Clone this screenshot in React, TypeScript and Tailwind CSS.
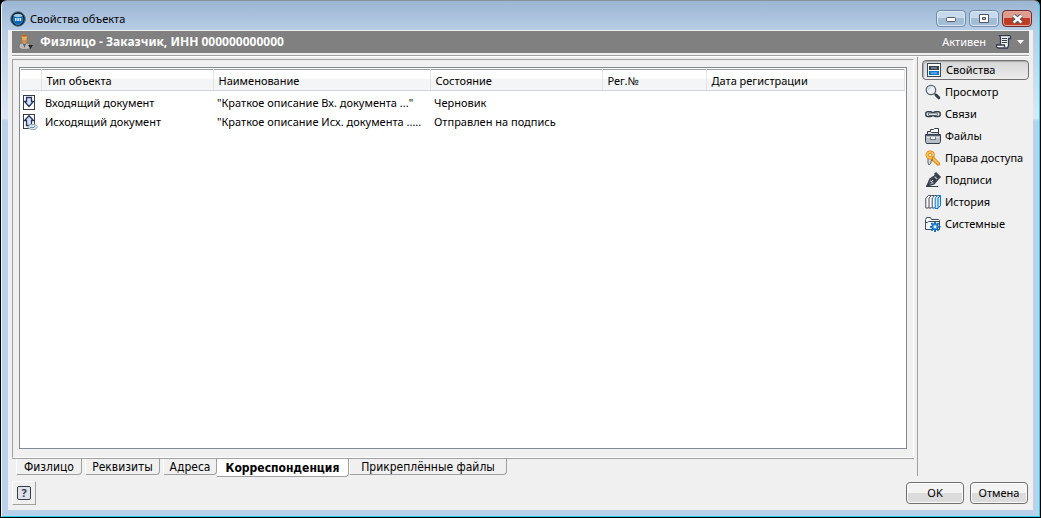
import { useState } from "react";
import type { ReactNode } from "react";

function Icon({ children }: { children: ReactNode }) {
  return (
    <svg width="16" height="16" viewBox="0 0 16 16" fill="none" className="shrink-0" aria-hidden="true">
      {children}
    </svg>
  );
}

const sections = [
  {
    name: "Свойства",
    icon: (
      <Icon>
        <rect x="1.5" y="1.5" width="13" height="13" fill="#fff" stroke="#3f4653" />
        <rect x="3" y="4" width="10" height="4" fill="#353d4a" />
        <path d="M5 6h6" stroke="#aeb8c6" />
        <rect x="3" y="9" width="10" height="4" fill="#0878d0" />
        <path d="M5 11h6" stroke="#9fc8ea" />
      </Icon>
    ),
  },
  {
    name: "Просмотр",
    icon: (
      <Icon>
        <circle cx="6" cy="6" r="4.7" fill="#edf1f5" stroke="#59616d" strokeWidth="1.3" />
        <path d="M3.5 6a2.5 2.5 0 0 1 2.500-2.500" stroke="#a9c4dc" />
        <path d="M9.3 9.3l1.700 1.700" stroke="#59616d" strokeWidth="1.500" />
        <path d="M11 11l2.800 2.800" stroke="#353d4a" strokeWidth="3" strokeLinecap="round" />
      </Icon>
    ),
  },
  {
    name: "Связи",
    icon: (
      <Icon>
        <rect x="0.8" y="5.8" width="6.7" height="4.700" rx="2" stroke="#353d4a" strokeWidth="1.500" />
        <rect x="8.5" y="5.8" width="6.700" height="4.700" rx="2" stroke="#353d4a" strokeWidth="1.500" />
        <rect x="3.500" y="7" width="9" height="2.400" rx="1" fill="#f0f2f4" stroke="#353d4a" strokeWidth="0.900" />
      </Icon>
    ),
  },
  {
    name: "Файлы",
    icon: (
      <Icon>
        <path d="M5.5 5V1.500h3l1-1h4V6" fill="#fff" stroke="#353d4a" />
        <path d="M2.500 7V3.500h3l1 1h7V7" fill="#dce0e5" stroke="#353d4a" />
        <path d="M.500 6.500h15v7l-1 2h-13l-1-2z" fill="#b7bdc5" stroke="#353d4a" />
        <path d="M1 7.500h14" stroke="#555d69" />
        <path d="M2 9.500h12" stroke="#e0e3e7" />
        <path d="M5.500 9v2.500h5V9" fill="#f6f7f8" stroke="#69717d" />
      </Icon>
    ),
  },
  {
    name: "Права доступа",
    icon: (
      <Icon>
        <path d="M3 7v6l1 2 2-2v-2l1-1-1-3" fill="#d8dbe0" stroke="#59616d" />
        <circle cx="5.200" cy="5" r="2.900" stroke="#d87912" strokeWidth="3.400" />
        <circle cx="5.200" cy="5" r="2.900" stroke="#ffc44c" strokeWidth="1.900" />
        <path d="M8 6.500l6.500 6.500v2H12l-1-2H9.500l-.500-2H7.500V8z" fill="#ffc44c" stroke="#d87912" />
      </Icon>
    ),
  },
  {
    name: "Подписи",
    icon: (
      <Icon>
        <path d="M2 14l3-7 5.500-3.500 3 3L9 12z" fill="#aeb5be" stroke="#353d4a" strokeWidth="1.400" />
        <path d="M9.500 2l4.500 4.500 1.500-1.500L11 .500z" fill="#353d4a" stroke="#353d4a" />
        <path d="M2 14l5.500-5.500" stroke="#353d4a" strokeWidth="1.500" />
        <path d="M5 8l4-3 3 3-3 3" fill="#353d4a" />
        <path d="M6 10l2-2" stroke="#fff" />
        <path d="M1 14.500h12" stroke="#353d4a" />
      </Icon>
    ),
  },
  {
    name: "История",
    icon: (
      <Icon>
        <path d="M.800 4l2.700-2.500H6v10L3.500 14H.800z" fill="#fff" stroke="#454c58" />
        <path d="M4 4l2.700-2.500H9v10L6.500 14H4z" fill="#fff" stroke="#454c58" />
        <path d="M7.200 4l2.700-2.500H12v10L9.500 14H7.200z" fill="#fff" stroke="#454c58" />
        <path d="M10.200 4l2.600-2.500h2.700v10L13 14.500h-2.800z" fill="#cfe5f8" stroke="#0878d0" />
        <path d="M13 14V4l2.500-2.500" stroke="#0878d0" />
      </Icon>
    ),
  },
  {
    name: "Системные",
    icon: (
      <Icon>
        <path d="M.500 13.500v-10l1-2h4l1 2h7l1 1v9z" fill="#f4f5f7" stroke="#454c58" />
        <path d="M.500 6.500h2l1-1h11" stroke="#454c58" />
        <path d="M10 5.500v10.500M5 10.800h10.500M6.300 7.100l7.400 7.400M13.700 7.100l-7.400 7.400" stroke="#0866b4" strokeWidth="1.800" />
        <circle cx="10" cy="10.800" r="3.200" fill="#4699da" stroke="#0866b4" />
        <circle cx="10" cy="10.800" r="1.300" fill="#fff" />
      </Icon>
    ),
  },
];

const columns = ["", "Тип объекта", "Наименование", "Состояние", "Рег.№", "Дата регистрации"];

const rows = [
  { type: "Входящий документ", title: "\"Краткое описание Вх. документа ...\"", state: "Черновик", incoming: true },
  { type: "Исходящий документ", title: "\"Краткое описание Исх. документа .....", state: "Отправлен на подпись", incoming: false },
];

const tabs = [
  { name: "Физлицо", size: "mr-[3px] w-[66px]" },
  { name: "Реквизиты", size: "mr-[3px] w-[75px]" },
  { name: "Адреса", size: "w-[54px]" },
  { name: "Корреспонденция", size: "w-[132px]" },
  { name: "Прикреплённые файлы", size: "w-[158px]" },
];

function DocumentIcon({ incoming }: { incoming: boolean }) {
  return (
    <Icon>
      <rect x="1.500" y=".500" width="11" height="14" fill="#fff" stroke="#353d4a" />
      {incoming ? (
        <path d="M4.500 2.500h5v4h2L7 11.500 2.500 6.500h2z" fill="#d3e2fa" stroke="#26345c" strokeWidth="1.300" />
      ) : (
        <>
          <path d="M4.500 11.500v-5h-2L7 1.800l4.500 4.700h-2v5z" fill="#d3e2fa" stroke="#26345c" strokeWidth="1.300" />
          <path d="M5.500 13l3-2.500h5l2 2-2 3h-5z" fill="#dce3e8" stroke="#9ba8b1" />
          <path d="M8 13.500h4l1-2" stroke="#5d9abd" />
        </>
      )}
    </Icon>
  );
}

export default function App() {
  const [section, setSection] = useState("Свойства");
  const [tab, setTab] = useState("Корреспонденция");

  return (
    <div className="flex min-h-screen flex-col bg-black px-px pb-px font-['Noto_Sans'] text-[11px] leading-4 text-black">
      <div className="flex flex-1 flex-col rounded-t-md border border-t-[#8a929b] border-r-[#21cfe8] border-b-[#21cfe8] border-l-[#eef6fc] bg-[linear-gradient(#9bb5d3_0px,#b7cde5_29px,#dce8f4_117px,#b9d1ea_120px)] px-[6px] pb-[6px]">
        {/* Title bar */}
        <header className="flex h-[29px] shrink-0 items-center pt-[6px]">
          <svg width="16" height="16" viewBox="0 0 16 16" className="ml-[2px]" aria-hidden="true">
            <circle cx="8" cy="8" r="7.300" fill="#071c36" stroke="#62758c" />
            <circle cx="8" cy="8.500" r="5" fill="#0d66b4" stroke="#2c8ccc" />
            <path d="M3 5a6 5 0 0 1 10 0c-3 1.500-7 1.500-10 0z" fill="#a6c9e0" />
            <path d="M5 7h1.500v3H5zM7.300 7h1.500v3H7.300zM9.600 7h1.500v3H9.600z" fill="#e6faff" />
          </svg>
          <h1 className="ml-1 flex-1">Свойства объекта</h1>
          <div className="mr-px flex gap-[3px]">
            <button aria-label="Свернуть" className="flex h-[17px] w-[30px] items-center justify-center rounded-sm border border-[#718ba8] bg-linear-to-b from-[#c7d9ec] from-50% to-[#a3bdd7] to-50% shadow-[inset_0_0_0_1px_#dce9f5]">
              <svg width="12" height="9" viewBox="0 0 12 9"><rect x="1.500" y="3.500" width="9" height="4" rx="1" fill="#fff" stroke="#535764" /></svg>
            </button>
            <button aria-label="Развернуть" className="flex h-[17px] w-[30px] items-center justify-center rounded-sm border border-[#718ba8] bg-linear-to-b from-[#c7d9ec] from-50% to-[#a3bdd7] to-50% shadow-[inset_0_0_0_1px_#dce9f5]">
              <svg width="12" height="10" viewBox="0 0 12 10"><path d="M1.500 .500h9v8h-9zM4.500 3.500v2h3v-2z" fill="#fff" fillRule="evenodd" stroke="#535764" /></svg>
            </button>
            <button aria-label="Закрыть" className="flex h-[17px] w-[30px] items-center justify-center rounded-sm border border-[#682c30] bg-linear-to-b from-[#df9c8d] from-50% to-[#bd3d23] to-50% shadow-[inset_0_0_0_1px_#e7a797]">
              <svg width="13" height="10" viewBox="0 0 13 10"><path d="M2.500 1.500l8 7M10.500 1.500l-8 7" stroke="#535764" strokeWidth="4.500" /><path d="M2.500 1.500l8 7M10.500 1.500l-8 7" stroke="#fff" strokeWidth="2.500" /></svg>
            </button>
          </div>
        </header>

        <main className="flex flex-1 flex-col bg-[#f0f0f0] px-1 pt-px">
          {/* Object header */}
          <div className="flex h-[22px] shrink-0 items-center bg-[#808080] pr-[5px] pl-[6px] text-white">
            <svg width="16" height="16" viewBox="0 0 16 16" aria-hidden="true">
              <path d="M3.500 1.500C5 .300 7.500 .300 9 1.500l-.500 5h-4z" fill="#efaa54" />
              <path d="M3.500 1.500C5 .300 7.500 .300 9 1.500v1H3.500z" fill="#b56619" />
              <path d="M4.500 6h4v4h-4z" fill="#dd9145" />
              <path d="M1 14c0-4 1.500-5 3.500-5l2 2 2-2c2.500 0 4 1.500 4 5-3 2-8.500 2-11.500 0z" fill="#b9bbbd" stroke="#5c5c5c" strokeWidth=".600" />
              <path d="M5 10l1.500 4 1.500-4z" fill="#636568" />
              <path d="M10 11h5l-2.500 4z" fill="#252525" />
            </svg>
            <h2 className="ml-[6px] flex-1 text-[12px] font-bold">Физлицо - Заказчик, ИНН 000000000000</h2>
            <span className="mr-[10px]">Активен</span>
            <button aria-label="Действия" className="flex items-center gap-[5px]">
              <svg width="16" height="14" viewBox="0 0 16 14">
                <path d="M4.500 10V2.500l-1-2h10l1 1v2h-2v7l-1 2.500h-9l-2-1v-2h8v2" fill="#f3f4f6" stroke="#353d4a" strokeWidth="1.300" />
                <path d="M6 3.500h5M6 5.500h5M6 7.500h5" stroke="#353d4a" />
              </svg>
              <svg width="7" height="4" viewBox="0 0 7 4"><path d="M0 0h7L3.500 4z" fill="#fff" /></svg>
            </button>
          </div>
          <div className="mt-[2px] h-[2px] shrink-0 border-t border-b border-t-[#a0a0a0] border-b-white" />

          <div className="flex flex-1">
            <div className="flex min-w-0 flex-1 flex-col pt-[2px]">
              <section className="flex flex-1 border border-t-[#a0a0a0] border-r-white border-b-white border-l-[#a0a0a0] p-[6px] pt-[7px] pb-2">
                <div className="flex-1 border border-[#828790] bg-white p-px">
                  <table className="w-full table-fixed border-collapse border-t border-[#a0a0a0]">
                    <colgroup>
                      <col className="w-[20px]" />
                      <col className="w-[172px]" />
                      <col className="w-[217px]" />
                      <col className="w-[172px]" />
                      <col className="w-[104px]" />
                      <col />
                    </colgroup>
                    <thead>
                      <tr className="h-[21px] bg-linear-to-b from-white from-40% to-[#f4f5f6] to-45%">
                        {columns.map((name) => (
                          <th key={name} className="border-r border-b border-r-[#e2e3e5] border-b-[#d0d2d5] p-0 pt-[2px] pl-[5px] text-left font-normal">
                            {name}
                          </th>
                        ))}
                      </tr>
                      <tr className="h-[3px]" />
                    </thead>
                    <tbody>
                      {rows.map((row) => (
                        <tr key={row.type} className="h-[19px] whitespace-nowrap">
                          <td className="p-0 pl-px"><DocumentIcon incoming={row.incoming} /></td>
                          <td className="p-0 pl-1">{row.type}</td>
                          <td className="p-0 pl-1">{row.title}</td>
                          <td className="p-0 pl-1">{row.state}</td>
                          <td className="p-0" />
                          <td className="p-0" />
                        </tr>
                      ))}
                    </tbody>
                  </table>
                </div>
              </section>

              {/* Bottom tabs */}
              <nav className="flex h-[18px] items-start border-t border-[#a0a0a0] pl-1 font-['DejaVu_Sans_Condensed'] text-[12px]">
                {tabs.map((item) => (
                  <button
                    key={item.name}
                    onClick={() => setTab(item.name)}
                    className={`${item.size} shrink-0 whitespace-nowrap rounded-br-sm border-r border-b border-[#a0a0a0] text-center ${
                      tab === item.name ? "h-[18px] bg-white font-bold" : "h-4 border-l border-l-white"
                    }`}
                  >
                    {item.name}
                  </button>
                ))}
              </nav>
            </div>

            <aside className="ml-[3px] flex w-[112px] shrink-0 flex-col gap-[2px] border-l border-[#a0a0a0] pt-[3px] pl-1">
              {sections.map((item) => (
                <button
                  key={item.name}
                  onClick={() => setSection(item.name)}
                  className={`flex h-5 shrink-0 items-center gap-1 whitespace-nowrap rounded-sm border ${
                    section === item.name
                      ? "border-[#707070] bg-linear-to-b from-[#d5d5d5] to-[#ececec] pl-[3px] shadow-[inset_1px_1px_1px_#aaa]"
                      : "border-transparent pl-[2px]"
                  }`}
                >
                  {item.icon}
                  {item.name}
                </button>
              ))}
            </aside>
          </div>

          {/* Dialog buttons */}
          <footer className="flex h-[34px] shrink-0 items-center">
            <button aria-label="Справка" className="flex size-6 items-center justify-center border border-t-white border-r-[#a0a0a0] border-b-[#a0a0a0] border-l-white">
              <span className="flex h-[14px] w-[14px] items-center justify-center rounded-xs border border-[#353d4a] bg-[#dfe3e9] leading-3 font-bold text-[#353d4a]">?</span>
            </button>
            <div className="ml-auto flex gap-[6px] pr-px">
              <button className="h-[22px] w-[58px] rounded-sm border border-[#707070] bg-linear-to-b from-[#f3f3f3] from-50% to-[#dcdcdc] to-50% shadow-[inset_0_0_0_1px_#fafafa]">OK</button>
              <button className="h-[22px] w-[58px] rounded-sm border border-[#707070] bg-linear-to-b from-[#f3f3f3] from-50% to-[#dcdcdc] to-50% shadow-[inset_0_0_0_1px_#fafafa]">Отмена</button>
            </div>
          </footer>
        </main>
      </div>
    </div>
  );
}
